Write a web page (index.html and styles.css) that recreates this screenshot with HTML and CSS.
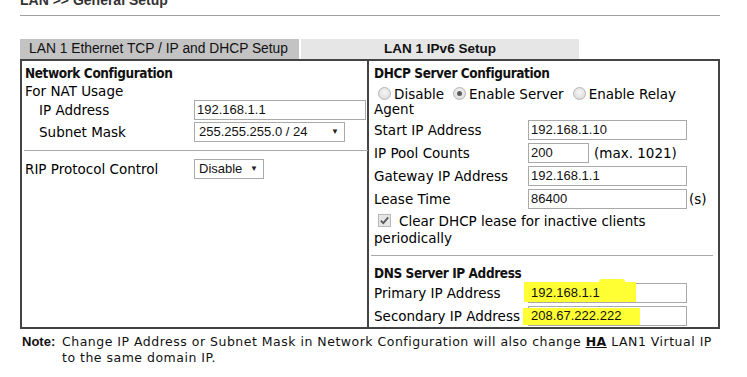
FILE: index.html
```html
<!DOCTYPE html>
<html>
<head>
<meta charset="utf-8">
<link rel="stylesheet" href="styles.css">
</head>
<body>
<div class="page">
  <div class="title">LAN &gt;&gt; General Setup</div>
  <div class="tabs">
    <div class="tab tab-active">LAN 1 Ethernet TCP / IP and DHCP Setup</div>
    <div class="tab tab-idle">LAN 1 IPv6 Setup</div>
  </div>
  <div class="panel">
    <div class="col col-left">
      <div class="heading">Network Configuration</div>
      <div class="row-text">For NAT Usage</div>
      <div class="frow indent">
        <span class="lbl lbl-left">IP Address</span>
        <div class="box box-wide">192.168.1.1</div>
      </div>
      <div class="frow indent">
        <span class="lbl lbl-left">Subnet Mask</span>
        <div class="box sel sel-mask"><span>255.255.255.0 / 24</span><span class="arrow">▼</span></div>
      </div>
      <div class="rule"></div>
      <div class="frow">
        <span class="lbl lbl-left0">RIP Protocol Control</span>
        <div class="box sel sel-rip"><span>Disable</span><span class="arrow">▼</span></div>
      </div>
    </div>
    <div class="col col-right">
      <div class="heading">DHCP Server Configuration</div>
      <div class="radios">
        <span class="radio radio-first"></span><span class="rtext">Disable</span>
        <span class="radio radio-on"></span><span class="rtext">Enable Server</span>
        <span class="radio"></span><span class="rtext">Enable Relay</span>
      </div>
      <div class="row-text agent">Agent</div>
      <div class="frow r23">
        <span class="lbl lbl-right">Start IP Address</span>
        <div class="box box-r">192.168.1.10</div>
      </div>
      <div class="frow r23">
        <span class="lbl lbl-right">IP Pool Counts</span>
        <div class="box box-short">200</div>
        <span class="after">(max. 1021)</span>
      </div>
      <div class="frow r23">
        <span class="lbl lbl-right">Gateway IP Address</span>
        <div class="box box-r">192.168.1.1</div>
      </div>
      <div class="frow r23">
        <span class="lbl lbl-right">Lease Time</span>
        <div class="box box-r">86400</div>
        <span class="after-s">(s)</span>
      </div>
      <div class="check-row">
        <span class="check"><svg width="11" height="11" viewBox="0 0 11 11"><path d="M1.8 5.6 L4.3 8.2 L9.2 2.4" fill="none" stroke="#5a5a5a" stroke-width="1.8"/></svg></span>
        <span class="ctext">Clear DHCP lease for inactive clients</span>
      </div>
      <div class="row-text periodically">periodically</div>
      <div class="rule rule-r"></div>
      <div class="heading dns">DNS Server IP Address</div>
      <div class="frow r23">
        <span class="lbl lbl-right">Primary IP Address</span>
        <div class="box box-r hlbox"><span class="hl hl1"></span><span class="hl hl1b"></span><span class="val">192.168.1.1</span></div>
      </div>
      <div class="frow r23">
        <span class="lbl lbl-right">Secondary IP Address</span>
        <div class="box box-r hlbox"><span class="hl hl2"></span><span class="val">208.67.222.222</span></div>
      </div>
    </div>
  </div>
  <div class="note">
    <span class="note-k">Note:</span>
    <span class="note-t">Change IP Address or Subnet Mask in Network Configuration will also change <u class="ha">HA</u> LAN1 Virtual IP to the same domain IP.</span>
  </div>
</div>
</body>
</html>
```

FILE: styles.css
```css
html, body { margin: 0; padding: 0; background: #fff; }
body { font-family: "DejaVu Sans", Verdana, sans-serif; font-size: 13.5px; color: #000; }
.page { width: 747px; height: 377px; overflow: hidden; position: relative; }
.title {
  font-family: "Liberation Sans", Arial, sans-serif; font-weight: bold; font-size: 14px;
  color: #333; margin: -7px 0 0 20px; height: 23px; line-height: 14px; box-sizing: border-box;
  width: 700px; border-bottom: 1px solid #a0a0a0;
}
.tabs { display: flex; margin: 23px 0 0 20px; height: 20px; }
.tab {
  font-family: "Liberation Sans", Arial, sans-serif; line-height: 20px;
  height: 20px; color: #111;
}
.tab-active { width: 279px; background: #c3c3c3; padding-left: 9px; box-sizing: border-box; font-size: 13.8px; }
.tab-idle { width: 278px; margin-left: 2px; background: #e6e6e6; text-align: center; font-weight: bold; font-size: 13.5px; }
.panel {
  margin-left: 20px; width: 700px; height: 270px; box-sizing: border-box;
  border: 2px solid #444; display: flex;
}
.col { box-sizing: border-box; height: 100%; }
.col-left { width: 347px; border-right: 2px solid #444; padding: 3px 0 0 3px; }
.col-right { flex: 1; padding: 3px 0 0 5px; }
.heading {
  font-family: "DejaVu Sans Condensed", Tahoma, sans-serif; font-weight: bold;
  height: 18px; line-height: 18px; font-size: 13.5px; letter-spacing: -0.4px; color: #111;
}
.row-text { height: 17px; line-height: 18px; }
.frow { display: flex; align-items: center; height: 22px; }
.r23 { height: 23px; }
.indent { padding-left: 14px; }
.lbl { display: inline-block; flex: none; }
.lbl-left { width: 155px; }
.lbl-left0 { width: 169px; }
.lbl-right { width: 154px; }
.box {
  font-family: "Liberation Sans", Arial, sans-serif; font-size: 13px;
  border: 1px solid #a9a9a9; height: 20px; line-height: 18px; box-sizing: border-box;
  padding-left: 2px; background: #fff; color: #111;
}
.box-wide { width: 172px; }
.sel { display: flex; justify-content: space-between; padding: 0 5px 0 4px; }
.sel-mask { width: 151px; }
.sel-rip { width: 70px; }
.arrow { font-size: 8px; color: #222; }
.sel-rip .arrow { margin-left: 4px; }
.rule { height: 1px; background: #aaa; margin: 7px 0 7px -1px; width: 344px; }
.rule-r { width: 342px; margin: 9px 0 8px -3px; }
.radios { display: flex; align-items: center; height: 19px; margin-top: 2px; }
.radio {
  width: 13px; height: 13px; border-radius: 50%; border: 1px solid #b5b5b5;
  background: radial-gradient(circle at 50% 40%, #f6f6f6, #d6d6d6); box-sizing: border-box;
  margin: 0 3px 0 4px; position: relative; flex: none;
}
.radio-first { margin-left: 4px; }
.radio-on::after {
  content: ""; position: absolute; left: 3px; top: 3px; width: 5px; height: 5px;
  border-radius: 50%; background: #5c5c5c;
}
.rtext { margin-right: 5px; }
.agent { height: 15px; line-height: 12px; margin-bottom: 0; }
.box-r { width: 159px; }
.box-short { width: 61px; }
.after { margin-left: 5px; }
.after-s { margin-left: 2px; }
.check-row { display: flex; align-items: center; height: 17px; margin-top: 2px; }
.check {
  width: 13px; height: 13px; border: 1px solid #b8b8b8; box-sizing: border-box;
  background: #e6e6e6; margin: 0 8px 0 4px; display: flex; align-items: center; justify-content: center;
}
.check svg { width: 11px; height: 11px; }
.periodically { line-height: 19px; margin-top: 0; }
.dns { margin-bottom: -1px; }
.hlbox { position: relative; overflow: visible; }
.hl { position: absolute; background: #ffff33; }
.hl1 { left: -5px; top: -2px; width: 112px; height: 20px; }
.hl1b { left: 70px; top: -5px; width: 26px; height: 4px; border-radius: 3px 3px 0 0; }
.hl2 { left: -6px; top: 1px; width: 117px; height: 17px; }
.val { position: relative; }
.note {
  display: flex; margin: 5px 0 0 22px; width: 710px;
  font-family: "DejaVu Sans", Tahoma, sans-serif; font-size: 12.5px; letter-spacing: 0.5px;
  line-height: 16px; color: #111;
}
.note-k { font-weight: bold; flex: none; width: 40px; font-family: "Liberation Sans", Arial, sans-serif; font-size: 13px; letter-spacing: 0; }
.note-t { width: 660px; }
.ha { font-weight: bold; }
```
